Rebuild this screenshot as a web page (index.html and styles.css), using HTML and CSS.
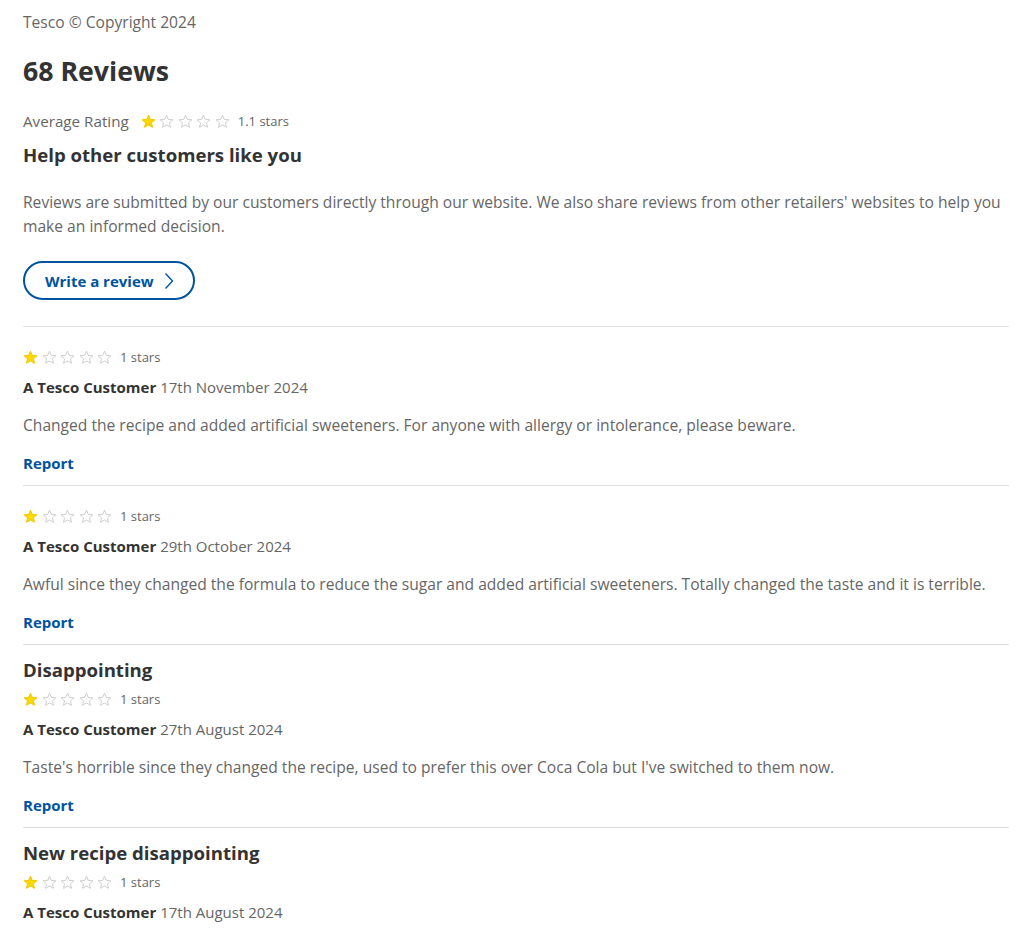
FILE: index.html
```html
<!DOCTYPE html>
<html lang="en">
<head>
<meta charset="utf-8">
<title>Reviews</title>
<link rel="stylesheet" href="styles.css">
</head>
<body>
<svg width="0" height="0" class="defs" aria-hidden="true">
  <defs>
    <path id="star" d="M7.5 1.2 L9.35 5.4 L13.9 5.8 L10.45 8.8 L11.5 13.3 L7.5 10.9 L3.5 13.3 L4.55 8.8 L1.1 5.8 L5.65 5.4 Z"/>
  </defs>
</svg>
<main class="page">
  <p class="copyright">Tesco © Copyright 2024</p>
  <h1 class="title">68 Reviews</h1>
  <div class="avg">
    <span class="avg-label">Average Rating</span>
    <span class="stars">
      <svg class="star full" viewBox="0 0 15 15"><use href="#star"/></svg>
      <svg class="star" viewBox="0 0 15 15"><use href="#star"/></svg>
      <svg class="star" viewBox="0 0 15 15"><use href="#star"/></svg>
      <svg class="star" viewBox="0 0 15 15"><use href="#star"/></svg>
      <svg class="star" viewBox="0 0 15 15"><use href="#star"/></svg>
    </span>
    <span class="stars-text">1.1 stars</span>
  </div>
  <h2 class="help">Help other customers like you</h2>
  <p class="intro">Reviews are submitted by our customers directly through our website. We also share reviews from other retailers' websites to help you make an informed decision.</p>
  <a class="write-btn" href="#">Write a review
    <svg class="chev" viewBox="0 0 10 18"><path d="M1.5 1.5 L8.5 9 L1.5 16.5"/></svg>
  </a>

  <section class="review">
    <div class="rating">
      <span class="stars">
        <svg class="star full" viewBox="0 0 15 15"><use href="#star"/></svg>
        <svg class="star" viewBox="0 0 15 15"><use href="#star"/></svg>
        <svg class="star" viewBox="0 0 15 15"><use href="#star"/></svg>
        <svg class="star" viewBox="0 0 15 15"><use href="#star"/></svg>
        <svg class="star" viewBox="0 0 15 15"><use href="#star"/></svg>
      </span>
      <span class="stars-text">1 stars</span>
    </div>
    <p class="author"><b>A Tesco Customer</b> 17th November 2024</p>
    <p class="body">Changed the recipe and added artificial sweeteners. For anyone with allergy or intolerance, please beware.</p>
    <a class="report" href="#">Report</a>
  </section>

  <section class="review">
    <div class="rating">
      <span class="stars">
        <svg class="star full" viewBox="0 0 15 15"><use href="#star"/></svg>
        <svg class="star" viewBox="0 0 15 15"><use href="#star"/></svg>
        <svg class="star" viewBox="0 0 15 15"><use href="#star"/></svg>
        <svg class="star" viewBox="0 0 15 15"><use href="#star"/></svg>
        <svg class="star" viewBox="0 0 15 15"><use href="#star"/></svg>
      </span>
      <span class="stars-text">1 stars</span>
    </div>
    <p class="author"><b>A Tesco Customer</b> 29th October 2024</p>
    <p class="body">Awful since they changed the formula to reduce the sugar and added artificial sweeteners. Totally changed the taste and it is terrible.</p>
    <a class="report" href="#">Report</a>
  </section>

  <section class="review titled">
    <h3 class="review-title">Disappointing</h3>
    <div class="rating">
      <span class="stars">
        <svg class="star full" viewBox="0 0 15 15"><use href="#star"/></svg>
        <svg class="star" viewBox="0 0 15 15"><use href="#star"/></svg>
        <svg class="star" viewBox="0 0 15 15"><use href="#star"/></svg>
        <svg class="star" viewBox="0 0 15 15"><use href="#star"/></svg>
        <svg class="star" viewBox="0 0 15 15"><use href="#star"/></svg>
      </span>
      <span class="stars-text">1 stars</span>
    </div>
    <p class="author"><b>A Tesco Customer</b> 27th August 2024</p>
    <p class="body">Taste's horrible since they changed the recipe, used to prefer this over Coca Cola but I've switched to them now.</p>
    <a class="report" href="#">Report</a>
  </section>

  <section class="review titled">
    <h3 class="review-title">New recipe disappointing</h3>
    <div class="rating">
      <span class="stars">
        <svg class="star full" viewBox="0 0 15 15"><use href="#star"/></svg>
        <svg class="star" viewBox="0 0 15 15"><use href="#star"/></svg>
        <svg class="star" viewBox="0 0 15 15"><use href="#star"/></svg>
        <svg class="star" viewBox="0 0 15 15"><use href="#star"/></svg>
        <svg class="star" viewBox="0 0 15 15"><use href="#star"/></svg>
      </span>
      <span class="stars-text">1 stars</span>
    </div>
    <p class="author"><b>A Tesco Customer</b> 17th August 2024</p>
  </section>
</main>
</body>
</html>
```

FILE: styles.css
```css
html, body {
  margin: 0;
  padding: 0;
  background: #fff;
}
body {
  font-family: "Open Sans", "Liberation Sans", sans-serif;
  color: #666;
  font-size: 16px;
  overflow: hidden;
}
.defs {
  position: absolute;
}
.page {
  padding: 12px 15px 0 23px;
}
p, h1, h2, h3 {
  margin: 0;
}
.copyright {
  font-size: 15.6px;
  line-height: 20px;
  color: #666;
}
.title {
  margin-top: 23px;
  font-size: 26.7px;
  line-height: 32px;
  font-weight: 700;
  color: #333;
}
.avg {
  display: flex;
  align-items: center;
  margin-top: 23px;
  height: 22px;
}
.avg-label {
  font-size: 15.2px;
  color: #666;
  margin-right: 12px;
}
.stars {
  display: flex;
  gap: 3.5px;
  margin-right: 8px;
}
.star {
  width: 15px;
  height: 15px;
  display: block;
}
.star use {
  fill: #fff;
  stroke: #cfcfcf;
  stroke-width: 1;
  stroke-linejoin: round;
}
.star.full use {
  fill: #fcd700;
  stroke: #f0c800;
}
.stars-text {
  font-size: 13px;
  color: #666;
}
.help {
  margin-top: 10px;
  font-size: 18.6px;
  line-height: 26px;
  font-weight: 700;
  color: #333;
}
.intro {
  margin-top: 22px;
  font-size: 15.6px;
  line-height: 24px;
  color: #666;
}
.write-btn {
  margin-top: 23px;
  display: inline-flex;
  align-items: center;
  gap: 10px;
  height: 39px;
  box-sizing: border-box;
  padding: 0 19px 0 20px;
  border: 2px solid #00539f;
  border-radius: 20px;
  color: #00539f;
  font-weight: 700;
  font-size: 15px;
  text-decoration: none;
}
.chev {
  width: 10px;
  height: 18px;
  fill: none;
  stroke: #00539f;
  stroke-width: 1.4;
}
.review {
  margin-top: 26px;
  border-top: 1px solid #e0e0e0;
  padding-top: 20px;
  padding-bottom: 1px;
}
.review + .review {
  margin-top: 10px;
}
.review.titled {
  padding-top: 13px;
}
.review-title {
  font-size: 18.6px;
  line-height: 24px;
  font-weight: 700;
  color: #333;
  margin-bottom: 7px;
}
.rating {
  display: flex;
  align-items: center;
  height: 20px;
}
.author {
  margin-top: 10px;
  font-size: 15px;
  line-height: 20px;
  color: #666;
}
.author b {
  color: #333;
  font-weight: 700;
}
.body {
  margin-top: 18px;
  font-size: 15.6px;
  line-height: 20px;
  color: #666;
}
.report {
  display: inline-block;
  margin-top: 18px;
  font-size: 15px;
  line-height: 20px;
  font-weight: 700;
  color: #00539f;
  text-decoration: none;
}
```
